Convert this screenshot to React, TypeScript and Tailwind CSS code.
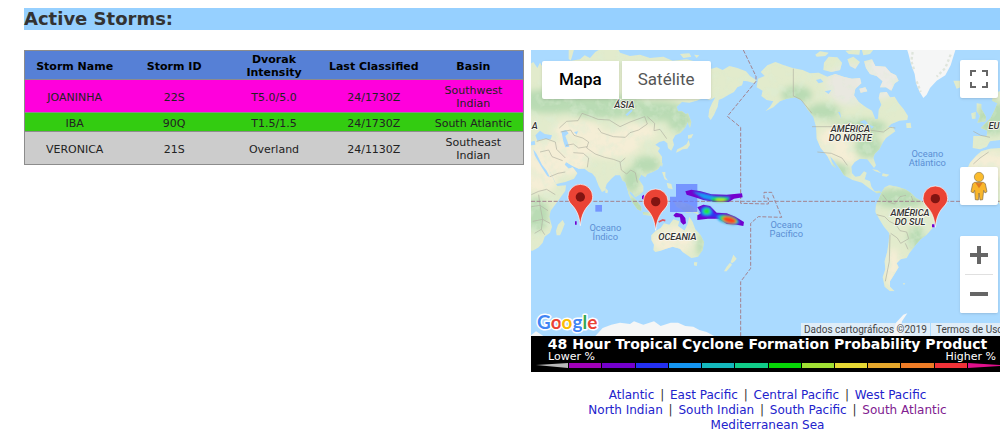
import type { ReactNode } from "react";
import { clsx } from "clsx";

type Storm = {
  name: string;
  id: string;
  intensity: string;
  classified: string;
  basin: string;
  row: string;
};

const storms: Storm[] = [
  { name: "JOANINHA", id: "22S", intensity: "T5.0/5.0", classified: "24/1730Z", basin: "Southwest Indian", row: "h-[33px] bg-[#ff00dc]" },
  { name: "IBA", id: "90Q", intensity: "T1.5/1.5", classified: "24/1730Z", basin: "South Atlantic", row: "h-[19px] bg-[#33cc11]" },
  { name: "VERONICA", id: "21S", intensity: "Overland", classified: "24/1130Z", basin: "Southeast Indian", row: "h-[33px] bg-[#cccccc]" },
];

const columns = ["Storm Name", "Storm ID", "Dvorak Intensity", "Last Classified", "Basin"];

const basinRows = [
  ["Atlantic", "East Pacific", "Central Pacific", "West Pacific"],
  ["North Indian", "South Indian", "South Pacific", "South Atlantic"],
  ["Mediterranean Sea"],
];

const scale = [
  "bg-[#a000b8]",
  "bg-[#7400cc]",
  "bg-[#2430f0]",
  "bg-[#1494f0]",
  "bg-[#14b8bc]",
  "bg-[#10cc88]",
  "bg-[#06d606]",
  "bg-[#a0e034]",
  "bg-[#e6d834]",
  "bg-[#e6a82c]",
  "bg-[#ee7c26]",
  "bg-[#f03238]",
];

// Land outlines. The map is drawn at three units per pixel.
const eastLand = [
  // Eurasia
  "M0 48L10 42L22 60L30 44L42 64L52 78L62 62L84 60L100 46L112 50L124 38L150 34L164 22L180 30L196 12L216 0L262 0L270 14L300 24L330 20L360 30L400 26L428 38L470 34L510 44L545 62L560 58L578 66L598 54L622 60L648 70L660 84L678 96L674 106L652 100L640 98L636 112L622 118L612 132L596 140L580 150L566 156L563 176L552 200L542 216L535 206L538 184L546 166L556 148L540 156L520 150L500 158L478 164L456 162L440 176L444 190L456 190L470 200L474 220L466 238L452 254L436 262L428 276L432 290L424 308L414 300L412 286L402 278L388 282L376 290L390 300L384 310L396 326L396 346L384 364L368 372L352 378L346 388L334 380L326 394L340 414L340 430L328 440L316 448L306 434L298 430L304 446L318 462L324 474L312 468L300 448L292 424L286 402L278 398L270 382L256 382L244 392L230 408L224 428L216 432L206 414L196 388L186 376L176 372L164 362L146 362L128 354L108 342L104 350L116 362L128 358L142 376L132 392L106 402L78 408L66 382L48 346L38 332L50 350L64 380L74 402L82 414L108 412L106 428L86 456L62 488L58 506L66 536L60 554L44 566L38 584L26 598L8 608L0 608Z",
  // Novaya Zemlya
  "M116 4L132 4L126 26L122 38L116 32Z",
  // New Siberian islands
  "M450 18L478 16L484 26L460 30ZM492 20L508 22L500 30Z",
  // Sri Lanka and Madagascar
  "M226 420L234 428L232 436L226 434ZM98 516L104 528L96 548L90 562L80 562L78 548L84 530Z",
  // Japan and Sakhalin
  "M474 262L490 258L484 270L474 272ZM476 276L480 290L472 302L458 304L448 310L438 314L442 304L458 296L470 288ZM468 198L474 196L484 222L480 240L474 226Z",
  // Philippines and Taiwan
  "M396 372L406 372L406 386L414 398L404 394ZM410 404L424 408L428 424L414 420ZM392 346L398 346L396 358Z",
  // Indonesia
  "M294 434L306 444L320 458L334 476L334 490L322 484L308 464ZM346 456L366 440L382 430L386 446L376 462L370 478L352 474ZM388 462L402 458L396 470L404 488L394 486ZM338 492L360 494L376 500L366 504L340 500ZM432 462L450 462L468 466L486 474L498 484L508 500L488 492L470 494L452 482L440 476Z",
  // Australia, Tasmania and New Zealand
  "M364 562L376 550L392 540L402 526L418 530L430 514L448 520L444 534L464 548L472 530L478 506L488 522L496 544L512 562L522 582L518 606L504 626L484 630L470 620L458 612L450 602L428 596L408 602L392 608L376 612L370 606L372 590L364 576ZM492 643L502 643L500 654L492 652ZM610 620L620 632L614 640L606 646L602 642ZM600 644L606 650L590 670L582 670L590 656Z",
];

const westLand = [
  // North America
  "M-6 92L14 84L2 72L22 52L46 42L72 52L98 60L128 66L150 76L176 74L202 86L226 78L250 86L276 92L300 90L304 106L286 122L282 142L296 162L318 178L336 188L346 214L354 212L356 186L364 170L356 150L360 134L380 132L390 148L404 146L416 166L430 182L444 204L442 216L418 218L394 228L384 238L398 236L406 250L392 260L378 270L368 284L358 304L344 318L340 330L348 352L342 360L330 344L322 334L300 332L284 342L274 356L276 376L286 386L300 384L312 370L320 374L314 394L330 400L334 416L344 430L358 428L364 434L350 436L332 424L306 404L278 396L252 382L238 360L222 338L210 324L216 342L228 360L216 352L202 324L182 300L170 272L168 236L160 206L142 184L128 160L106 148L80 152L60 160L40 178L16 190L30 176L40 160L20 156L4 144L8 128L-10 118Z",
  // Canadian islands
  "M166 20L180 10L206 14L196 24L170 26ZM192 44L206 26L232 28L246 44L240 66L214 72L190 66ZM262 34L280 26L300 42L286 62L270 54ZM256 8L300 4L298 20L266 18ZM304 0L344 0L330 18L310 22ZM312 40L336 34L346 54L376 56L392 74L408 82L416 98L404 106L394 128L378 118L360 118L368 100L350 84L330 78L318 60ZM298 122L316 118L322 130L302 134Z",
  // Newfoundland, Cuba and Hispaniola
  "M438 226L452 224L454 240L440 240ZM336 364L352 366L364 376L346 370ZM368 376L388 380L380 386L366 384Z",
  // Iceland, British Isles, Europe and Africa
  "M580 98L604 98L606 116L590 122ZM650 166L664 168L664 182L678 206L676 220L652 224L660 204L650 190ZM634 196L648 192L646 212L636 212ZM720 130L700 136L696 158L712 166L704 186L692 210L676 226L662 240L682 248L680 264L640 264L638 300L660 304L680 296L690 280L720 276ZM664 310L690 302L720 300L720 470L700 440L660 446L622 410L614 380L630 344L648 324Z",
  // South America
  "M364 434L374 418L388 412L412 416L436 424L452 434L468 450L486 460L512 466L532 478L536 490L526 510L518 540L500 560L482 574L466 592L448 616L440 630L422 634L410 646L416 658L402 680L390 700L390 716L404 730L390 730L374 716L368 688L376 664L374 640L382 610L386 580L388 556L372 536L358 514L346 492L348 470L356 454Z",
  "M428 706L436 706L432 711Z",
];

const ice = {
  antarctica: "M0 864L18 850L40 864ZM196 864L218 840L244 830L270 824L300 828L312 820L340 830L372 820L392 834L422 824L444 824L466 834L490 836L508 846L530 852L552 864Z",
  peninsula: "M1070 864L1092 846L1098 824L1120 800L1132 796L1116 820L1112 846L1120 864Z",
  greenland: "M1130 0L1136 20L1144 52L1154 78L1158 106L1168 130L1180 150L1190 140L1200 120L1220 98L1246 82L1262 52L1278 0Z",
};

type Patch = [cx: number, cy: number, rx: number, ry: number];

const greens: Patch[] = [
  [60, 160, 110, 36],
  [230, 176, 130, 34],
  [380, 190, 90, 30],
  [450, 220, 36, 34],
  [350, 350, 40, 26],
  [304, 396, 26, 36],
  [330, 470, 60, 30],
  [20, 500, 36, 50],
  [470, 480, 50, 16],
  [512, 590, 12, 36],
  [800, 140, 46, 26],
  [880, 190, 50, 24],
  [980, 236, 90, 24],
  [1016, 296, 40, 34],
  [930, 364, 26, 30],
  [1110, 450, 80, 30],
  [1160, 570, 26, 36],
  [1390, 210, 50, 50],
];

const sands: Patch[] = [
  [140, 246, 76, 28],
  [240, 290, 90, 40],
  [320, 252, 60, 26],
  [80, 330, 100, 56],
  [30, 400, 50, 34],
  [430, 575, 64, 40],
  [916, 280, 50, 50],
  [950, 330, 30, 20],
  [1088, 660, 22, 60],
  [1380, 350, 60, 40],
];

const borders = [
  "M88 240L110 220L144 218L156 196L184 206L204 214L238 216L270 236L300 222L344 206L352 228L326 246L300 254L286 268L250 266L214 254L204 240",
  "M352 206L374 226L372 248L390 244L410 272M92 252L122 246L132 262L158 270L176 282L170 300L196 318L224 328L250 334L272 342L286 330M108 292L130 288L146 300L172 296M130 314L160 316L176 330L172 358",
  "M270 342L274 366L290 378L302 366L316 374L322 404M20 280L48 272L76 282L80 304L106 330M30 312L56 306L66 326L98 338M60 386L84 376L106 372",
  "M4 440L26 430L50 424L76 440M4 476L30 472L54 488M8 520L38 514L60 526M14 556L34 544L44 560M26 440L30 472L38 514L34 544",
  "M790 62L790 144L812 154L846 196M862 312L904 316L936 330L952 352M846 236L980 236L1016 246L1060 252L1080 238L1096 240",
  "M1058 440L1074 462L1094 468L1110 446L1128 442M1040 500L1064 506L1078 520L1098 530L1110 548L1130 552L1136 572L1112 586L1102 570L1082 556M1080 560L1078 640L1066 700M1126 586L1134 604M1144 444L1150 462",
  "M1330 250L1352 262L1380 268M1376 312L1350 330L1330 348",
];

const pins = [
  { storm: "JOANINHA", x: 151, y: 447 },
  { storm: "VERONICA", x: 377, y: 461 },
  { storm: "IBA", x: 1216, y: 452 },
];

function PlaceLabel({ x, y, lines, ocean }: { x: number; y: number; lines: string[]; ocean?: boolean }) {
  return (
    <g
      textAnchor="middle"
      className={clsx(
        "text-[28px]",
        ocean ? "fill-[#5b8fd4]" : "fill-[#333333] stroke-[#f8f8f0] stroke-[5px] font-medium italic",
      )}
      paintOrder="stroke"
    >
      {lines.map((line, i) => (
        <text key={line} x={x} y={y + i * 27}>
          {line}
        </text>
      ))}
    </g>
  );
}

function WorldMap() {
  return (
    <svg viewBox="3 6 1407 858" preserveAspectRatio="xMinYMin slice" role="img" aria-label="Storm map" className="block h-full w-full bg-[#aadaff] font-[Roboto,sans-serif]">
      <defs>
        <clipPath id="land">
          <path d={eastLand.join("")} />
          <path d={westLand.join("")} transform="translate(690 0)" />
        </clipPath>
        <filter id="soft" x="-30%" y="-30%" width="160%" height="160%">
          <feGaussianBlur stdDeviation="10" />
        </filter>
        <filter id="glow" x="-20%" y="-30%" width="140%" height="160%">
          <feGaussianBlur stdDeviation="3" />
        </filter>
        {/* breaks the vegetation up into small mottled areas */}
        <filter id="mottle" x="0" y="0" width="100%" height="100%">
          <feTurbulence type="fractalNoise" baseFrequency="0.035" numOctaves="3" seed="4" />
          <feColorMatrix values="0 0 0 0 0.72  0 0 0 0 0.85  0 0 0 0 0.66  4 0 0 0 -1.9" />
        </filter>
      </defs>

      <g clipPath="url(#land)">
        <rect x="0" y="0" width="1410" height="864" fill="#e2ebcc" />
        <g filter="url(#soft)">
          {greens.map(([cx, cy, rx, ry]) => (
            <ellipse key={`${cx}-${cy}`} cx={cx} cy={cy} rx={rx} ry={ry} fill="#b9dbb4" />
          ))}
          {sands.map(([cx, cy, rx, ry]) => (
            <ellipse key={`${cx}-${cy}`} cx={cx} cy={cy} rx={rx} ry={ry} fill="#f5eed6" />
          ))}
          <ellipse cx="960" cy="110" rx="70" ry="60" fill="#e9e8e0" />
          <ellipse cx="1050" cy="90" rx="60" ry="60" fill="#ecebe6" />
        </g>
        <rect x="0" y="0" width="1410" height="864" filter="url(#mottle)" opacity="0.4" />
      </g>

      {/* inland waters */}
      <path
        d="M94 250L108 246L116 256L106 264L112 280L118 296L106 298L100 280ZM16 262L30 248L44 258L66 262L62 274L40 272L22 278ZM0 282L14 278L16 290L0 292ZM132 252L144 250L140 260ZM286 200L304 184L308 188L292 204ZM10 304L20 318L36 350L50 368L60 388L52 384L34 356L14 322Z"
        fill="#aadaff"
      />
      <path
        d="M988 222L1004 216L1014 226L1008 230ZM1004 232L1012 232L1010 250ZM1018 230L1032 236L1024 242ZM858 96L872 92L880 102L866 106ZM884 130L904 126L896 138ZM924 192L930 192L934 212Z"
        fill="#aadaff"
      />
      <path d={ice.antarctica + ice.peninsula + ice.greenland} fill="#f5f6f6" />
      <path d="M1148 12L1144 40L1154 70M1160 100L1172 132M1262 20L1246 60L1220 86" fill="none" stroke="#dfe5dc" strokeWidth="7" strokeDasharray="8 7" />
      <path d={borders.join("")} fill="none" stroke="#b0b0a2" strokeWidth="2" strokeLinejoin="round" />

      <g fill="none" stroke="#a3838f" strokeWidth="3" strokeDasharray="12 5">
        <path d="M3 460H1410" />
        <path d="M640 6L678 85V100L592 205L632 238V466L715 468V450H702V433H725L755 508L685 506L662 526V661L632 701V864" />
      </g>

      <g fill="#637dff" fillOpacity="0.75">
        <rect x="196" y="471" width="20" height="20" />
        <path d="M438 408H502V492H420V446H438Z" />
      </g>

      {/* formation probability areas */}
      <path d="M466 430L484 425L512 430L544 439L590 440L636 436L638 448L612 452L596 462L556 462L520 456L490 446L470 440Z" fill="#7300cf" />
      <path d="M502 478L520 470L540 474L560 494L590 496L616 506L642 522L640 534L620 530L590 528L566 512L534 512L502 516L502 502L514 496Z" fill="#7300cf" />
      <path d="M430 502L438 494L456 498L466 510L468 526L460 530L452 522L450 508L436 508Z" fill="#7300cf" />
      <path d="M336 444L342 440V456L336 452ZM135 520L140 520V530L135 530ZM1206 529H1214V538H1206Z" fill="#7300cf" />
      <g filter="url(#glow)">
        <path d="M510 482L524 474L540 478L556 498L588 500L614 512L632 526L616 526L590 524L566 508L534 506L512 504Z" fill="#2a38f2" />
        <path d="M486 430L520 436L554 444L602 446L590 458L556 460L520 452Z" fill="#129cf5" />
        <ellipse cx="570" cy="454" rx="28" ry="7" fill="#18e040" />
        <ellipse cx="572" cy="456" rx="15" ry="4" fill="#c6f01c" />
        <ellipse cx="530" cy="490" rx="16" ry="13" fill="#129cf5" />
        <ellipse cx="530" cy="490" rx="10" ry="9" fill="#28e440" />
        <ellipse cx="594" cy="515" rx="34" ry="13" fill="#129cf5" transform="rotate(14 594 515)" />
        <ellipse cx="596" cy="515" rx="28" ry="12" fill="#30e23c" transform="rotate(14 596 515)" />
        <ellipse cx="598" cy="516" rx="21" ry="9" fill="#ff3c20" transform="rotate(14 598 516)" />
      </g>
      <path d="M386 522L398 516L406 518" fill="none" stroke="#e05560" strokeWidth="5" />

      <PlaceLabel x={283} y={181} lines={["ÁSIA"]} />
      <PlaceLabel x={14} y={243} lines={["A"]} />
      <PlaceLabel x={961} y={252} lines={["AMÉRICA", "DO NORTE"]} />
      <PlaceLabel x={1140} y={503} lines={["AMÉRICA", "DO SUL"]} />
      <PlaceLabel x={442} y={577} lines={["OCEANIA"]} />
      <PlaceLabel x={1392} y={243} lines={["EU"]} />
      <PlaceLabel x={226} y={550} lines={["Oceano", "Índico"]} ocean />
      <PlaceLabel x={769} y={540} lines={["Oceano", "Pacífico"]} ocean />
      <PlaceLabel x={1192} y={326} lines={["Oceano", "Atlântico"]} ocean />

      {pins.map((pin) => (
        <g key={pin.storm} transform={`translate(${pin.x} ${pin.y})`}>
          <path
            d="M0 86C-4 50-14 36-27 22C-34 14-37 8-37 -1A37 37 0 0 1 37 -1C37 8 34 14 27 22C14 36 4 50 0 86Z"
            fill="#ea4335"
            stroke="#ffffff"
            strokeWidth="2"
          />
          <circle r="14" fill="#811411" />
        </g>
      ))}
    </svg>
  );
}

function MapButton({ label, className, children }: { label: string; className?: string; children: ReactNode }) {
  return (
    <button type="button" aria-label={label} className={clsx("flex w-[38px] items-center justify-center bg-white", className)}>
      {children}
    </button>
  );
}

function MapControls() {
  return (
    <>
      <div className="absolute top-[11px] left-[11px] flex gap-[3px] font-[Roboto,sans-serif] text-[17px]">
        <button type="button" className="h-[38px] rounded-l-xs bg-white px-[17px] font-medium text-black shadow-sm">
          Mapa
        </button>
        <button type="button" className="h-[38px] rounded-r-xs bg-white px-4 text-[#565656] shadow-sm">
          Satélite
        </button>
      </div>

      <div className="absolute top-[10px] right-[2px]">
        <MapButton label="Fullscreen" className="h-[38px] rounded-xs shadow-sm">
          <svg viewBox="0 0 18 18" className="size-[18px]" fill="#666666">
            <path d="M0 0V6H2V2H6V0ZM12 0V2H16V6H18V0ZM0 12V18H6V16H2V12ZM16 12V16H12V18H18V12Z" />
          </svg>
        </MapButton>
      </div>

      <div className="absolute right-[2px] bottom-[23px] flex flex-col gap-[31px]">
        <MapButton label="Street View" className="h-[38px] rounded-xs shadow-sm">
          <svg viewBox="0 0 54 90" className="h-[30px] w-[18px]">
            <path d="M14 34L8 38L3 62L10 66L14 58L16 86L25 87L27 66L30 87L38 86L41 58L45 66L51 62L46 38L40 34Z" fill="#f9b62b" stroke="#806a43" strokeWidth="2" />
            <circle cx="27" cy="18" r="14" fill="#fbbc2d" stroke="#8c7a50" strokeWidth="2" />
            <path d="M15 34L27 52L39 34C32 38 22 38 15 34Z" fill="#e07b23" />
          </svg>
        </MapButton>
        <div className="flex flex-col rounded-xs bg-white shadow-sm">
          <MapButton label="Zoom in" className="h-[38px] rounded-xs">
            <svg viewBox="0 0 18 18" className="size-[18px]" fill="#666666">
              <path d="M7 0H11V7H18V11H11V18H7V11H0V7H7Z" />
            </svg>
          </MapButton>
          <div className="mx-[5px] h-px bg-[#e0e0e0]" />
          <MapButton label="Zoom out" className="h-[38px] rounded-xs">
            <svg viewBox="0 0 18 18" className="size-[18px]" fill="#666666">
              <path d="M0 7H18V11H0Z" />
            </svg>
          </MapButton>
        </div>
      </div>

      <svg viewBox="0 0 66 26" role="img" aria-label="Google" className="absolute bottom-0 left-[4px] h-[26px] w-[66px]">
        <text x="2" y="19" paintOrder="stroke" stroke="#ffffff" strokeWidth="3" strokeLinejoin="round" className="font-[Lato,sans-serif] text-[19px] font-bold">
          <tspan fill="#4285f4">G</tspan>
          <tspan fill="#ea4335">o</tspan>
          <tspan fill="#fbbc05">o</tspan>
          <tspan fill="#4285f4">g</tspan>
          <tspan fill="#34a853">l</tspan>
          <tspan fill="#ea4335">e</tspan>
        </text>
      </svg>

      <div className="absolute right-[-8px] bottom-0 flex gap-px font-[Roboto,sans-serif] text-[10px] leading-[13px] whitespace-nowrap text-[#444444]">
        <span className="bg-[#f5f5f5]/70 px-[3px]">Dados cartográficos ©2019</span>
        <a href="#terms" className="bg-[#f5f5f5]/70 px-[5px]">
          Termos de Uso
        </a>
      </div>
    </>
  );
}

function ProbabilityLegend() {
  return (
    <div className="h-[36px] bg-black text-white">
      <p className="pl-1 text-center text-sm leading-[17px] font-bold whitespace-nowrap">
        48 Hour Tropical Cyclone Formation Probability Product
      </p>
      <div className="flex justify-between pr-1 pl-[17px] text-[11px] leading-[8px]">
        <span>Lower %</span>
        <span>Higher %</span>
      </div>
      <div className="mt-[2px] flex h-[5px] gap-px pl-[5px]">
        <svg viewBox="0 0 32 5" preserveAspectRatio="none" className="h-full min-w-0 flex-1" fill="#b8b8b8">
          <path d="M0 2L32 0V5Z" />
        </svg>
        {scale.map((color) => (
          <span key={color} className={clsx("flex-1", color)} />
        ))}
        <svg viewBox="0 0 32 5" preserveAspectRatio="none" className="h-full min-w-0 flex-1" fill="#e0108c">
          <path d="M0 0L32 2V3L0 5Z" />
        </svg>
      </div>
    </div>
  );
}

function StormTable() {
  return (
    <table className="w-full table-fixed border-collapse border border-[#8c8c8c] text-center text-[11px] leading-[13px] text-[#222222]">
      <thead>
        <tr className="h-[29px] bg-[#5680d6] text-black">
          {columns.map((column) => (
            <th key={column} scope="col" className="px-[2px] pt-[2px] font-bold">
              {column}
            </th>
          ))}
        </tr>
      </thead>
      <tbody>
        {storms.map((storm) => (
          <tr key={storm.id} className={clsx("border-t border-[#8c8c8c]", storm.row)}>
            <td className="pt-[2px]">{storm.name}</td>
            <td className="pt-[2px]">{storm.id}</td>
            <td className="pt-[2px]">{storm.intensity}</td>
            <td className="pt-[2px]">{storm.classified}</td>
            <td className="px-2 pt-[2px]">{storm.basin}</td>
          </tr>
        ))}
      </tbody>
    </table>
  );
}

function BasinLinks() {
  return (
    <nav aria-label="Basins" className="mt-4 pl-1 text-center text-xs leading-[15px] text-[#333333]">
      {basinRows.map((row) => (
        <div key={row[0]}>
          {row.map((basin, i) => (
            <span key={basin}>
              {i > 0 && <span className="px-[2px]"> | </span>}
              <a href={`#${basin}`} className={basin === "South Atlantic" ? "text-[#802090]" : "text-[#2222cc]"}>
                {basin}
              </a>
            </span>
          ))}
        </div>
      ))}
    </nav>
  );
}

export default function App() {
  return (
    <main className="overflow-hidden bg-white pt-2 pl-6 font-[Verdana,'DejaVu_Sans',sans-serif]">
      <h1 className="bg-[#96d0ff] text-lg leading-[22px] font-bold text-[#333333]">Active Storms:</h1>
      <div className="mt-5 flex items-start gap-[7px]">
        <div className="w-[500px] shrink-0">
          <StormTable />
        </div>
        <div className="min-w-0 flex-1">
          <div className="relative h-[286px] overflow-hidden">
            <WorldMap />
            <MapControls />
          </div>
          <ProbabilityLegend />
          <BasinLinks />
        </div>
      </div>
    </main>
  );
}
